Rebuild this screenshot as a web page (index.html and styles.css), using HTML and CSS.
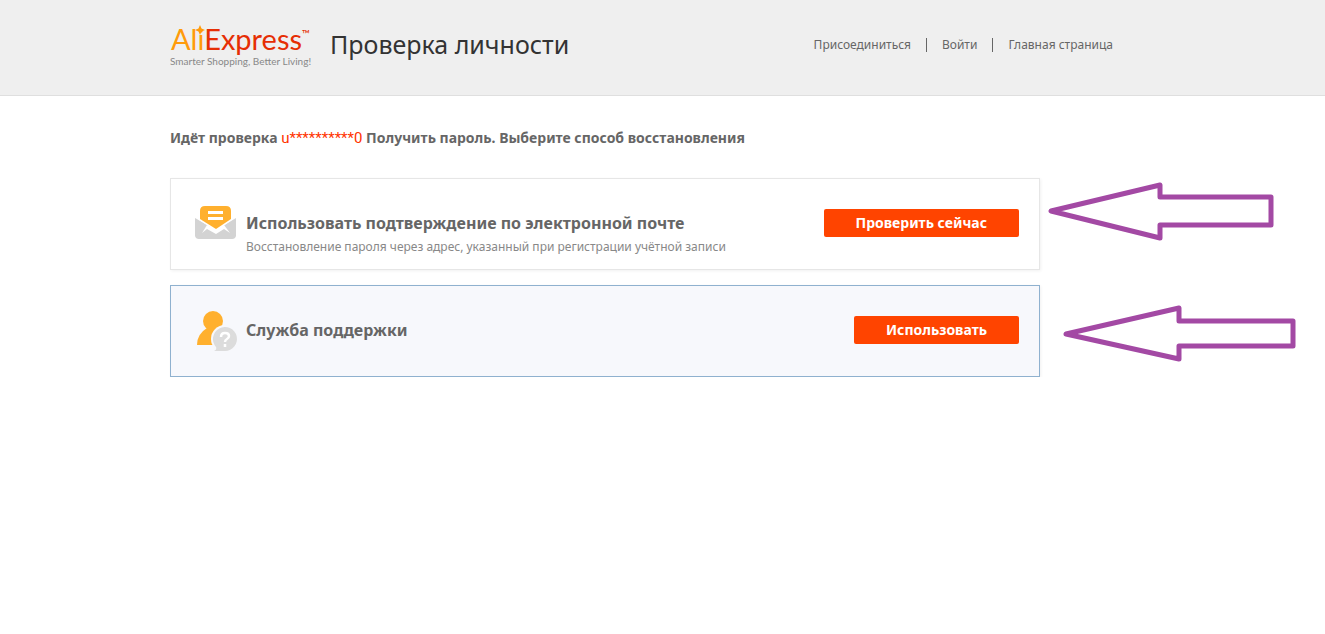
FILE: index.html
```html
<!DOCTYPE html>
<html lang="ru">
<head>
<meta charset="utf-8">
<meta name="viewport" content="width=device-width, initial-scale=1">
<title>Проверка личности</title>
<link rel="stylesheet" href="styles.css">
</head>
<body>
<header class="header">
  <div class="wrap header-row">
    <a class="logo" href="#">
      <span class="logo-name"><span class="logo-ali">Ali</span>Express<span class="logo-tm">™</span></span>
      <svg class="logo-star" viewBox="0 0 10 10" aria-hidden="true"><path d="M5 0 6.5 3.5 10 5 6.5 6.5 5 10 3.5 6.5 0 5 3.5 3.5Z" fill="#ff9b0a"/></svg>
      <span class="logo-tag">Smarter Shopping, Better Living!</span>
    </a>
    <h1 class="title">Проверка личности</h1>
    <nav class="nav">
      <a href="#">Присоединиться</a>
      <a href="#">Войти</a>
      <a href="#">Главная страница</a>
    </nav>
  </div>
</header>
<main class="wrap main">
  <p class="lead">Идёт проверка <span class="user">u**********0</span> Получить пароль. Выберите способ восстановления</p>
  <section class="card">
    <svg class="icon" viewBox="0 0 44 44" aria-hidden="true">
      <path d="M1 14 22 26 42 14V32a4 4 0 0 1-4 3H5a4 4 0 0 1-4-3Z" fill="#d3d3d3"/>
      <path d="M5 16V7Q5 1 11 1H32Q38 1 38 7V16L22 27Z" fill="#fff"/>
      <path d="M6 15V7Q6 2 11 2H32Q37 2 37 7V15L22 25Z" fill="#ffb02e"/>
      <path d="M8 29 13 21 22 26 30 21 36 29 30 25 22 30 13 25Z" fill="#fff"/>
      <path d="M14 8.500H29M14 14.500H29" stroke="#fff" stroke-width="3"/>
    </svg>
    <div class="info">
      <h2>Использовать подтверждение по электронной почте</h2>
      <p>Восстановление пароля через адрес, указанный при регистрации учётной записи</p>
    </div>
    <button class="btn" type="button">Проверить сейчас</button>
    <svg class="arrow arrow-first" viewBox="0 0 226 60" aria-hidden="true"><path d="M2 30 111 4V16H222V44H111V57Z"/></svg>
  </section>
  <section class="card card-active">
    <svg class="icon" viewBox="0 0 44 44" aria-hidden="true">
      <circle cx="19" cy="10" r="10" fill="#ffb02e"/>
      <path d="M3 34Q3 23 13 17H25Q34 24 34 34Z" fill="#ffb02e"/>
      <circle cx="31" cy="28" r="14" fill="#f7f8fc"/>
      <path d="M20 40Q23 39 22 36A12 12 0 1 1 31 40Z" fill="#dcdcdc"/>
      <path d="M27 26Q27 22 31 22 35 22 35 25 35 27 33 28 31 29 31 31M31 33V36" fill="none" stroke="#fff" stroke-width="2.500"/>
    </svg>
    <div class="info">
      <h2>Служба поддержки</h2>
    </div>
    <button class="btn" type="button">Использовать</button>
    <svg class="arrow arrow-second" viewBox="0 0 232 60" aria-hidden="true"><path d="M2 30 115 4V17H229V42H115V55Z"/></svg>
  </section>
</main>
</body>
</html>
```
FILE: styles.css
```css
* { box-sizing: border-box; }
body {
  margin: 0;
  background: #fff;
  color: #666;
  font-family: "Noto Sans", "Open Sans", sans-serif;
  font-size: 12px;
  overflow-x: hidden;
}
h1, h2, p { margin: 0; }
a { color: inherit; text-decoration: none; }
.wrap { max-width: 985px; margin: 0 auto; }
.header { background: #efefef; border-bottom: 1px solid #dfdfdf; }
.header-row { display: flex; align-items: flex-start; min-height: 95px; }
.logo {
  position: relative;
  display: flex;
  flex-direction: column;
  flex: none;
  width: 142px;
  margin-top: 23px;
  white-space: nowrap;
}
.logo-name {
  padding-left: 1px;
  font-family: Lato, sans-serif;
  font-size: 29px;
  line-height: 32px;
  color: #e62e04;
}
.logo-ali { color: #ff9b0a; }
.logo-tm { font-size: 11px; vertical-align: top; line-height: 22px; }
.logo-star { position: absolute; left: 25px; top: 2px; width: 10px; height: 10px; }
.logo-tag {
  font-family: Lato, sans-serif;
  font-size: 10px;
  line-height: 13px;
  color: #888;
}
.title {
  margin: 27px 0 0 18px;
  font-size: 25px;
  line-height: 34px;
  font-weight: 400;
  color: #333;
}
.nav { display: flex; margin: 38px 42px 0 auto; line-height: 14px; }
.nav a + a { margin-left: 15px; padding-left: 15px; border-left: 1px solid #666; }
.main { padding-top: 30px; }
.lead { font-size: 14px; line-height: 24px; font-weight: 700; }
.user { font-family: Roboto, sans-serif; font-size: 15px; font-weight: 400; color: #ff3300; }
.card {
  position: relative;
  display: flex;
  align-items: flex-start;
  max-width: 870px;
  min-height: 92px;
  margin-top: 28px;
  padding: 25px 20px 10px 23px;
  border: 1px solid #e6e6e6;
  box-shadow: 1px 1px 3px rgba(0, 0, 0, .06);
}
.card-active { margin-top: 15px; border-color: #8fb1cf; background: #f7f8fc; }
.icon { flex: none; width: 44px; height: 44px; }
.info { flex: 1; margin: 6px 0 0 8px; }
.info h2 { font-size: 16px; line-height: 26px; font-weight: 700; }
.info p { line-height: 22px; color: #888; }
.btn {
  margin-top: 5px;
  padding: 0 32px;
  border: 0;
  border-radius: 2px;
  background: #ff4400;
  color: #fff;
  font: 700 14px/28px "Noto Sans", "Open Sans", sans-serif;
  cursor: pointer;
}
.arrow { position: absolute; left: 100%; pointer-events: none; overflow: visible; }
.arrow path { fill: none; stroke: #a349a4; stroke-width: 5; stroke-linejoin: round; }
.arrow-first { width: 226px; height: 60px; margin-left: 10px; top: 2px; }
.arrow-second { width: 232px; height: 60px; margin-left: 25px; top: 18px; }
```
